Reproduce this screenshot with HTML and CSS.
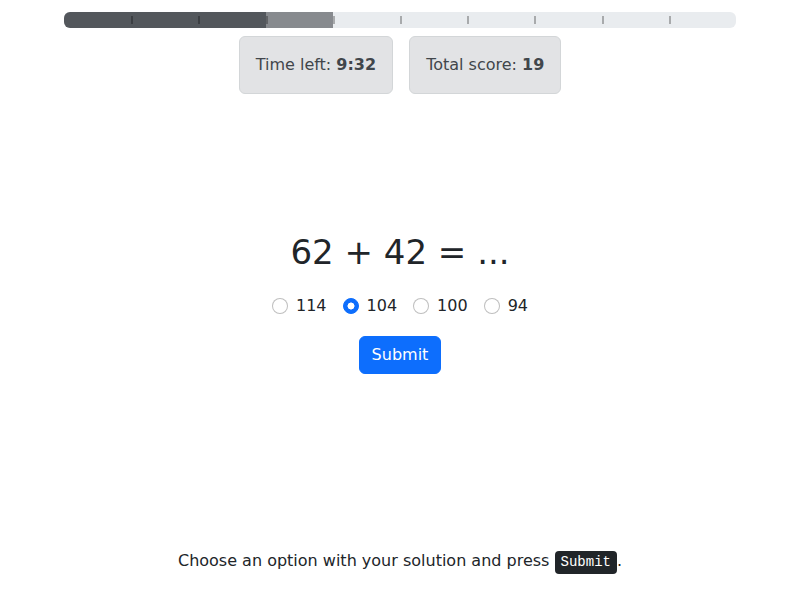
FILE: index.html
```html
<!DOCTYPE html>
<html lang="en">
<head>
<meta charset="utf-8">
<title>Quiz</title>
<link rel="stylesheet" href="styles.css">
</head>
<body>
<div class="page">
  <div class="progress">
    <div class="bar bar-done" style="width:30%"></div>
    <div class="bar bar-current" style="width:10%"></div>
    <div class="ticks">
      <span class="tick-cell"></span><span class="tick-cell"></span><span class="tick-cell"></span><span class="tick-cell"></span><span class="tick-cell"></span><span class="tick-cell"></span><span class="tick-cell"></span><span class="tick-cell"></span><span class="tick-cell"></span><span class="tick-cell"></span>
    </div>
  </div>

  <div class="stats">
    <div class="stat">Time left: <b>9:32</b></div>
    <div class="stat">Total score: <b>19</b></div>
  </div>

  <main class="question">
    <h1 class="equation">62 + 42 = ...</h1>
    <form class="answer-form" onsubmit="return false">
      <div class="options">
        <label class="option"><input type="radio" name="answer" value="114"><span>114</span></label>
        <label class="option"><input type="radio" name="answer" value="104" checked><span>104</span></label>
        <label class="option"><input type="radio" name="answer" value="100"><span>100</span></label>
        <label class="option"><input type="radio" name="answer" value="94"><span>94</span></label>
      </div>
      <button type="submit" class="btn-submit">Submit</button>
    </form>
  </main>

  <p class="hint">Choose an option with your solution and press <kbd>Submit</kbd>.</p>
</div>
</body>
</html>
```

FILE: styles.css
```css
html, body {
  margin: 0;
  padding: 0;
  background: #fff;
}

body {
  font-family: "DejaVu Sans", sans-serif;
  font-size: 16px;
  line-height: 1.5;
  color: #212529;
}

.page {
  width: 672px;
  margin: 0 auto;
  padding-top: 12px;
}

.progress {
  position: relative;
  display: flex;
  height: 16px;
  background: #e9ecef;
  border-radius: 6px;
  overflow: hidden;
}

.bar {
  height: 100%;
}

.bar-done {
  background: #53575c;
}

.bar-current {
  background: #878a8e;
}

.ticks {
  position: absolute;
  inset: 0;
  display: flex;
}

.tick-cell {
  flex: 1;
  position: relative;
}

.tick-cell + .tick-cell::before {
  content: "";
  position: absolute;
  left: 0;
  top: 4px;
  width: 2px;
  height: 8px;
  background: rgba(0, 0, 0, 0.28);
}

.stats {
  display: flex;
  justify-content: center;
  gap: 16px;
  margin-top: 8px;
}

.stat {
  padding: 16px;
  background: #e2e3e5;
  border: 1px solid #d3d6d8;
  border-radius: 6px;
  color: #41464b;
  line-height: 24px;
}

.stat b {
  font-weight: 700;
}

.question {
  margin-top: 138px;
  text-align: center;
}

.equation {
  margin: 0;
  font-size: 34px;
  font-weight: 500;
  line-height: 1.2;
  color: #212529;
}

.answer-form {
  display: flex;
  flex-direction: column;
  align-items: center;
}

.options {
  display: flex;
  justify-content: center;
  gap: 16px;
  margin-top: 21px;
  height: 24px;
}

.option {
  display: flex;
  align-items: flex-start;
  gap: 8px;
  line-height: 24px;
}

.option input {
  appearance: none;
  -webkit-appearance: none;
  width: 16px;
  height: 16px;
  margin: 4px 0 0 0;
  border: 1px solid rgba(0, 0, 0, 0.25);
  border-radius: 50%;
  background: #fff;
  box-sizing: border-box;
}

.option input:checked {
  background: #0d6efd;
  border-color: #0d6efd;
  background-image: radial-gradient(circle, #fff 0, #fff 3.2px, transparent 3.8px);
}

.btn-submit {
  margin-top: 18px;
  padding: 6px 12px;
  font-family: "DejaVu Sans", sans-serif;
  font-size: 16px;
  line-height: 24px;
  color: #fff;
  background: #0d6efd;
  border: 1px solid #0d6efd;
  border-radius: 6px;
}

.hint {
  margin: 175px 0 0;
  text-align: center;
  line-height: 24px;
}

kbd {
  font-family: "Liberation Mono", monospace;
  font-size: 14px;
  padding: 3px 6px 4px;
  color: #fff;
  background: #212529;
  border-radius: 4px;
}
```
